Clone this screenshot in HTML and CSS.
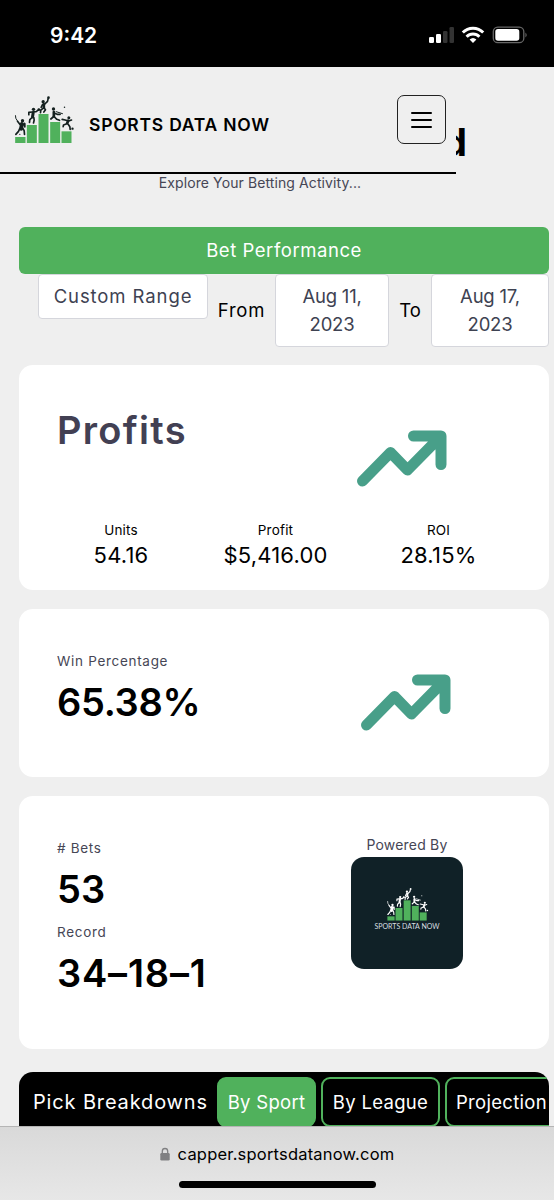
FILE: index.html
```
<!DOCTYPE html>
<html lang="en">
<head>
    <meta charset="UTF-8">
    <meta name="viewport" content="width=device-width, initial-scale=1.0">
    <title>Sports Data Now</title>
    <link rel="stylesheet" href="styles.css">
</head>
<body>
    <svg class="defs" width="0" height="0">
        <symbol id="logo" viewBox="40 30 185 150">
            <g fill="#50b15c">
                <rect x="46" y="156" width="31" height="18"/>
                <rect x="81" y="120" width="30" height="54"/>
                <rect x="116" y="87" width="30" height="87"/>
                <rect x="151" y="111" width="30" height="63"/>
                <rect x="185" y="139" width="30" height="35"/>
            </g>
            <g fill="none" stroke="currentColor" stroke-width="5" stroke-linecap="round" stroke-linejoin="round">
                <path d="M74 115l-5 6-9-3-7-9M75 116v10M60 130l-4 9-8 9M69 130l4 7 1 11"/>
                <path d="M66 117l-2 14" stroke-width="12"/>
                <path d="M47 92l1 8 5 8" stroke-width="3"/>
                <path d="M87 89v-7l10-1 12-1 8-6M95 99l-5 5-1 8M102 98l1 7-2 9"/>
                <path d="M100 83l-2 13" stroke-width="9"/>
                <path d="M124 67l4-8 7-2 8-8 2-8M130 70l-7 5-1 8M133 69l4 5-5 7"/>
                <path d="M132 58v9" stroke-width="8"/>
                <path d="M162 84l10 4h9M160 96l-7 6M164 96l7 7 8 3"/>
                <path d="M162 81v13" stroke-width="8"/>
                <path d="M169 80l19 6" stroke-width="3"/>
                <path d="M187 103l9 2 10 3 9-3M199 117l-8 3-1 5M205 118l5 7 1 8"/>
                <path d="M205 107l-3 8" stroke-width="8"/>
            </g>
            <g fill="currentColor">
                <circle cx="68" cy="107" r="5"/>
                <circle cx="60" cy="148" r="2"/>
                <circle cx="101" cy="73" r="5"/>
                <circle cx="117" cy="74" r="4"/>
                <circle cx="130" cy="50" r="5"/>
                <circle cx="146" cy="38" r="4"/>
                <circle cx="161" cy="72" r="5"/>
                <circle cx="194" cy="67" r="2.2"/>
                <circle cx="207" cy="98" r="4.5"/>
                <circle cx="218" cy="131" r="3.5"/>
            </g>
        </symbol>
        <symbol id="trend" viewBox="0 0 90 58">
            <path d="M5.500 51L33.500 22.500L50.500 40L84 6M56.500 6H84V34.500" fill="none" stroke="#489f89" stroke-width="11" stroke-linecap="round" stroke-linejoin="round"/>
        </symbol>
    </svg>

    <div class="statusbar">
        <span class="time">9:42</span>
        <svg class="status-icons" viewBox="0 0 100 20" width="100" height="20">
            <rect x="0" y="12" width="5" height="6" rx="1.300" fill="#fff"/>
            <rect x="7" y="9" width="5" height="9" rx="1.300" fill="#fff"/>
            <rect x="14" y="6" width="4.500" height="12" rx="1.300" fill="#333"/>
            <rect x="20.500" y="2" width="4.500" height="16" rx="1.300" fill="#333"/>
            <g fill="none" stroke="#fff" stroke-width="3">
                <path d="M33.800 7.500a14.300 14.300 0 0 1 20.400 0"/>
                <path d="M37.600 11.700a9 9 0 0 1 12.800 0"/>
            </g>
            <path d="M44 18l-3.400-3.500a5 5 0 0 1 6.800 0z" fill="#fff"/>
            <rect x="64.300" y="2.100" width="30.500" height="15.600" rx="4.500" fill="none" stroke="#666" stroke-width="1.300"/>
            <rect x="66.300" y="4.100" width="24" height="11.600" rx="2.700" fill="#fff"/>
            <path d="M96.500 7.500q2.200 2.400 0 5z" fill="#777"/>
        </svg>
    </div>

    <header class="navbar">
        <svg class="nav-logo"><use href="#logo"/></svg>
        <span class="brand">SPORTS DATA NOW</span>
        <button class="menu">
            <span></span>
            <span></span>
            <span></span>
        </button>
    </header>

    <main>
        <div class="heading">
            <h1>Dashboard</h1>
            <p>Explore Your Betting Activity...</p>
        </div>

        <div class="banner">Bet Performance</div>

        <div class="filters">
            <div class="select range">Custom Range</div>
            <span class="from">From</span>
            <div class="select date-from">Aug 11,<br>2023</div>
            <span class="to">To</span>
            <div class="select date-to">Aug 17,<br>2023</div>
        </div>

        <section class="card profits">
            <div class="card-top">
                <h2>Profits</h2>
                <svg class="trend"><use href="#trend"/></svg>
            </div>
            <div class="stats">
                <div class="stat"><small>Units</small><span>54.16</span></div>
                <div class="stat"><small>Profit</small><span>$5,416.00</span></div>
                <div class="stat"><small>ROI</small><span>28.15%</span></div>
            </div>
        </section>

        <section class="card win">
            <div>
                <p class="label">Win Percentage</p>
                <p class="value percent">65.38%</p>
            </div>
            <svg class="trend"><use href="#trend"/></svg>
        </section>

        <section class="card bets">
            <div>
                <p class="label"># Bets</p>
                <p class="value">53</p>
                <p class="label record">Record</p>
                <p class="value score">34–18–1</p>
            </div>
            <div class="powered">
                <p>Powered By</p>
                <div class="badge">
                    <svg><use href="#logo"/></svg>
                    <span>SPORTS DATA NOW</span>
                </div>
            </div>
        </section>

        <nav class="tabs">
            <span class="tabs-title">Pick Breakdowns</span>
            <button class="tab active">By Sport</button>
            <button class="tab league">By League</button>
            <button class="tab projection">Projection</button>
        </nav>
    </main>

    <footer class="browser-bar">
        <div class="url">
            <svg viewBox="0 0 10 14" width="10" height="14">
                <path d="M2.300 7V4.200a2.700 2.700 0 0 1 5.400 0V7" fill="none" stroke="#808082" stroke-width="1.300"/>
                <rect x="0.300" y="6" width="9.400" height="7.500" rx="1.300" fill="#808082"/>
            </svg>
            <span>capper.sportsdatanow.com</span>
        </div>
        <div class="home-indicator"></div>
    </footer>
</body>
</html>
```
FILE: styles.css
```
* {
    box-sizing: border-box;
}
body {
    margin: 0;
    height: 1200px;
    display: flex;
    flex-direction: column;
    position: relative;
    overflow: hidden;
    background: #efefef;
    color: #000;
    font-family: Inter, "Liberation Sans", sans-serif;
}
h1, h2, p {
    margin: 0;
}
button {
    font-family: inherit;
    background: none;
    padding: 0;
}
.defs {
    position: absolute;
}

/* phone status bar */
.statusbar {
    flex: none;
    height: 67px;
    background: #000;
    color: #fff;
    display: flex;
    justify-content: space-between;
    padding: 25px 25px 0 50px;
}
.time {
    font-size: 21px;
    line-height: 22px;
    font-weight: 600;
}

/* navbar lies over the page heading */
.navbar {
    position: absolute;
    top: 67px;
    left: 0;
    width: 456px;
    height: 107px;
    display: flex;
    align-items: center;
    padding: 0 10px 0 13px;
    background: #efefef;
    border-bottom: 2px solid #000;
    z-index: 1;
}
.nav-logo {
    width: 62px;
    height: 50px;
    color: #14201f;
}
.brand {
    margin: 10px 0 0 14px;
    font-size: 17.5px;
    font-weight: 600;
    letter-spacing: 0.75px;
}
.menu {
    margin-left: auto;
    width: 49px;
    height: 49px;
    border: 1px solid #222;
    border-radius: 7px;
    display: flex;
    flex-direction: column;
    align-items: center;
    justify-content: center;
    gap: 5px;
}
.menu span {
    width: 21px;
    height: 2px;
    border-radius: 1px;
    background: #000;
}

main {
    flex: 1;
    min-height: 0;
    padding: 0 5px 0 19px;
    overflow: hidden;
}
.heading {
    width: 482px;
    height: 160px;
    padding-top: 51px;
    text-align: center;
}
.heading h1 {
    font-size: 38px;
    line-height: 48px;
    text-align: right;
    padding-right: 34px;
}
.heading p {
    margin-top: 7px;
    font-size: 14px;
    line-height: 20px;
    letter-spacing: 0.1px;
    color: #464655;
}
.banner {
    height: 47px;
    border-radius: 6px;
    background: #50b15c;
    color: #fff;
    font-size: 18.5px;
    line-height: 46px;
    letter-spacing: 0.55px;
    text-align: center;
}
.filters {
    display: flex;
    align-items: flex-start;
    height: 91px;
    padding-left: 19px;
    font-size: 18.5px;
    line-height: 28px;
}
.select {
    background: #fff;
    border: 1px solid #d5d6dc;
    border-radius: 4px;
    padding: 7px 0 8px;
    text-align: center;
    color: #3e4252;
    letter-spacing: -0.2px;
}
.range {
    width: 170px;
    letter-spacing: 0.9px;
}
.date-from {
    width: 114px;
}
.date-to {
    width: 118px;
}
.from, .to {
    margin-top: 22px;
    text-align: center;
}
.from {
    width: 67px;
    letter-spacing: 0.8px;
}
.to {
    width: 42px;
}

.card {
    background: #fff;
    border-radius: 14px;
    margin-bottom: 19px;
    padding-left: 38px;
}
.trend {
    flex: none;
    width: 90px;
    height: 58px;
}
.profits {
    height: 225px;
    padding-top: 40px;
}
.card-top {
    display: flex;
    justify-content: space-between;
    padding-right: 102px;
}
.card-top h2 {
    font-size: 38px;
    line-height: 50px;
    font-weight: 600;
    color: #424053;
    letter-spacing: 1.3px;
}
.card-top .trend {
    margin-top: 25px;
}
.stats {
    display: flex;
    margin-top: 33px;
}
.stat {
    display: flex;
    flex-direction: column;
    text-align: center;
}
.stat:nth-child(1) {
    width: 128px;
}
.stat:nth-child(2) {
    width: 181px;
}
.stat:nth-child(3) {
    width: 145px;
}
.stat small {
    font-size: 13.5px;
    line-height: 18px;
    letter-spacing: 0.2px;
}
.stat span {
    font-size: 22px;
    line-height: 32px;
    letter-spacing: 0.2px;
}
.win {
    display: flex;
    justify-content: space-between;
    height: 168px;
    padding: 42px 98px 0 38px;
}
.win .trend {
    margin-top: 23px;
}
.label {
    font-size: 13.5px;
    line-height: 20px;
    letter-spacing: 0.7px;
    color: #464655;
}
.value {
    font-size: 38px;
    line-height: 50px;
    font-weight: 600;
    margin-top: 6px;
}
.percent {
    letter-spacing: -0.3px;
}
.score {
    letter-spacing: 0.8px;
}
.bets {
    display: flex;
    justify-content: space-between;
    height: 253px;
    padding: 42px 86px 0 38px;
    margin-bottom: 23px;
}
.record {
    margin-top: 8px;
}
.powered {
    width: 112px;
    margin-top: -3px;
    text-align: center;
    font-size: 14px;
    line-height: 20px;
    letter-spacing: 0.2px;
    color: #464655;
}
.badge {
    display: flex;
    flex-direction: column;
    align-items: center;
    height: 112px;
    margin-top: 2px;
    padding-top: 30px;
    border-radius: 13px;
    background: #102127;
    color: #fff;
}
.badge svg {
    flex: none;
    width: 43px;
    height: 35px;
}
.badge span {
    color: #d8dfe0;
    font-family: Lato, sans-serif;
    font-size: 7px;
    line-height: 8px;
    letter-spacing: 0;
    white-space: nowrap;
}

.tabs {
    display: flex;
    align-items: flex-start;
    height: 80px;
    padding: 5px 0 0 14px;
    border-radius: 14px 14px 0 0;
    background: #000;
    color: #fff;
    overflow: hidden;
}
.tabs-title {
    flex: none;
    width: 184px;
    font-size: 20px;
    line-height: 50px;
    letter-spacing: 0.85px;
    white-space: nowrap;
}
.tab {
    flex: none;
    width: 99px;
    height: 50px;
    margin-right: 5px;
    border: 2px solid #50b15c;
    border-radius: 9px;
    color: #fff;
    font-size: 18.5px;
    letter-spacing: 0.3px;
    white-space: nowrap;
}
.tab.active {
    background: #50b15c;
}
.league {
    width: 119px;
}
/* runs past the right edge of the bar */
.projection {
    width: 125px;
    padding-left: 9px;
    text-align: left;
}

/* browser address bar */
.browser-bar {
    flex: none;
    height: 74px;
    border-top: 1px solid #b5b5b5;
    background: linear-gradient(#d9d9d9, #e7e7e7);
    display: flex;
    flex-direction: column;
    align-items: center;
}
.url {
    display: flex;
    align-items: center;
    gap: 8px;
    height: 54px;
    font-size: 16.5px;
    letter-spacing: 0.2px;
}
.home-indicator {
    width: 197px;
    height: 7px;
    border-radius: 4px;
    background: #000;
}
```
